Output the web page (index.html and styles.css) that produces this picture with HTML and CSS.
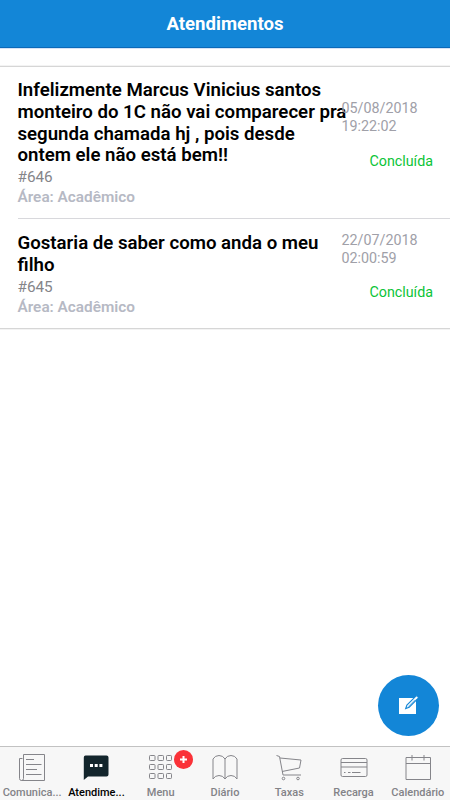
FILE: index.html
```html
<!DOCTYPE html>
<html lang="pt-BR">
<head>
<meta charset="utf-8">
<title>Atendimentos</title>
<link rel="stylesheet" href="styles.css">
</head>
<body>
<div class="app">
  <header class="header"><h1>Atendimentos</h1></header>
  <main class="content">
    <ul class="list">
      <li class="item">
        <div class="info">
          <h2>Infelizmente Marcus Vinicius santos<br>monteiro do 1C não vai comparecer pra<br>segunda chamada hj , pois desde<br>ontem ele não está bem!!</h2>
          <p class="number">#646</p>
          <p class="area">Área: Acadêmico</p>
        </div>
        <div class="meta">
          <p class="date">05/08/2018<br>19:22:02</p>
          <p class="status">Concluída</p>
        </div>
      </li>
      <li class="item">
        <div class="info">
          <h2>Gostaria de saber como anda o meu<br>filho</h2>
          <p class="number">#645</p>
          <p class="area">Área: Acadêmico</p>
        </div>
        <div class="meta">
          <p class="date">22/07/2018<br>02:00:59</p>
          <p class="status">Concluída</p>
        </div>
      </li>
    </ul>
  </main>
  <button class="fab" aria-label="Novo">
    <svg width="24" height="24" viewBox="0 0 24 24"><path d="M2 4h17v16H2z" fill="#fff"/><path d="M8.700 14.500l1.200-3.500 9-8.900q1-.6 1.900.3t.2 1.900l-8.800 8.900z" fill="#fff" stroke="#1386d7" stroke-width="1.100"/><path d="M11 12.800l7-7" stroke="#1386d7" stroke-width=".6"/></svg>
  </button>
  <nav class="tabs">
    <a class="tab">
      <svg width="28" height="30" viewBox="0 0 28 30"><path d="M5.500 1.500h21v26h-23q-2 0-2-2v-20h3M5.500 1.500v24q0 2-2 2M8 6.500h8M8 11.500h15.500M8 16.500h11M8 21.500h15.500"/></svg>
      <span>Comunica...</span>
    </a>
    <a class="tab active">
      <svg width="28" height="30" viewBox="0 0 28 30"><path class="bubble" d="M3.500 2.500h21q2 0 2 2v17q0 2-2 2H6l-4.200 3.500V4.500q0-2 1.700-2z"/><path class="dots" d="M8 11h3v3H8zM12.700 11h3v3h-3zM17.400 11h3v3h-3z"/></svg>
      <span>Atendime...</span>
    </a>
    <a class="tab">
      <svg width="28" height="30" viewBox="0 0 28 30"><g><rect x="2.500" y="2.500" width="5.500" height="5" rx=".8"/><rect x="11" y="2.500" width="5.500" height="5" rx=".8"/><rect x="19.500" y="2.500" width="5" height="5" rx=".8"/><rect x="2.500" y="11.500" width="5.500" height="5" rx=".8"/><rect x="11" y="11.500" width="5.500" height="5" rx=".8"/><rect x="19.500" y="11.500" width="5" height="5" rx=".8"/><rect x="2.500" y="20.500" width="5.500" height="5" rx=".8"/><rect x="11" y="20.500" width="5.500" height="5" rx=".8"/><rect x="19.500" y="20.500" width="5" height="5" rx=".8"/></g></svg>
      <b class="badge"><svg width="9" height="9" viewBox="0 0 9 9"><path d="M4.500 1v7M1 4.500h7"/></svg></b>
      <span>Menu</span>
    </a>
    <a class="tab">
      <svg width="28" height="30" viewBox="0 0 28 30"><path d="M14 6Q12 2.500 8 2.500T2 6v20q2-3.500 6-3.500t6 3.500q2-3.500 6-3.500t6 3.500V6q-2-3.500-6-3.500T14 6v20"/></svg>
      <span>Diário</span>
    </a>
    <a class="tab">
      <svg width="28" height="30" viewBox="0 0 28 30"><path d="M1.500 2.500l3 1 3.500 18.500h18M5 5l21 2-1.500 8L7 18.500"/><circle cx="8.500" cy="25.500" r="1.300"/><circle cx="23" cy="25.500" r="1.300"/></svg>
      <span>Taxas</span>
    </a>
    <a class="tab">
      <svg width="28" height="30" viewBox="0 0 28 30"><rect x="1" y="5.500" width="26" height="18" rx="1.500"/><path d="M1 9.500h26M1 14h26M4 19.500h1.500M8 19.500h2.500M12 19.500h8.500"/></svg>
      <span>Recarga</span>
    </a>
    <a class="tab">
      <svg width="28" height="30" viewBox="0 0 28 30"><path d="M2 4.500h24.500v22H2zM2 10.500h24.500M8 2v5.500M20 2v5.500"/></svg>
      <span>Calendário</span>
    </a>
  </nav>
</div>
</body>
</html>
```
FILE: styles.css
```css
* { box-sizing: border-box; margin: 0; padding: 0; }
body { font-family: Roboto, "Liberation Sans", sans-serif; background: #fff; }
.app { position: relative; height: 800px; display: flex; flex-direction: column; overflow: hidden; }
.header { height: 48px; display: flex; align-items: center; justify-content: center; background: #1386d7; border-bottom: 1px solid #0b69b8; box-shadow: 0 1px 0 #d5e3f5; }
.header h1 { font-size: 18.600px; line-height: 22px; font-weight: 700; color: #fff; }
.content { flex: 1; padding-top: 18px; }
.list { list-style: none; border-top: 1px solid #d6d6d6; border-bottom: 1px solid #d6d6d6; box-shadow: 0 -1px 0 #f3f3f3, 0 1px 0 #f3f3f3; }
.item { display: flex; justify-content: space-between; margin-left: 17.500px; height: 151px; padding-top: 13px; }
.item + .item { border-top: 1px solid #d8d8dc; height: 110px; padding-top: 14px; }
.info { width: 324px; white-space: nowrap; }
.info h2 { font-size: 18.650px; line-height: 21.800px; font-weight: 600; color: #000; }
.number { font-size: 15.300px; line-height: 21px; color: #858589; }
.area { font-size: 15.350px; line-height: 19px; font-weight: 600; color: #b6b9c4; }
.meta { width: 108.500px; padding-top: 20px; }
.item + .item .meta { padding-top: 0; margin-top: -1px; }
.date { font-size: 14.300px; line-height: 17.500px; font-weight: 400; color: #a0a0a8; }
.status { margin: 17px 17px 0 0; text-align: right; font-size: 14.300px; line-height: 18px; font-weight: 400; color: #0cc437; }
.item + .item .status { margin-top: 16px; }
.fab { position: absolute; left: 378px; top: 675px; width: 61px; height: 61px; border: 0; border-radius: 50%; background: #1386d7; display: flex; align-items: center; justify-content: center; }
.tabs { height: 54px; display: grid; grid-template-columns: repeat(7, 1fr); background: #f7f7f7; border-top: 1px solid #c2c2c2; }
.tab { position: relative; display: flex; flex-direction: column; align-items: center; padding-top: 6px; color: #838387; font-size: 11px; line-height: 14px; font-weight: 500; white-space: nowrap; }
.tab > svg { fill: none; stroke: #85858a; stroke-width: 1; }
.tab span { margin-top: 3px; }
.tab.active { color: #000; }
.tab .bubble { fill: #13252c; stroke: none; }
.tab .dots { fill: #fff; stroke: none; }
.badge { position: absolute; left: 45px; top: 3px; width: 19px; height: 19px; border-radius: 50%; background: #fa3238; display: flex; align-items: center; justify-content: center; }
.badge svg { stroke: #fff; stroke-width: 2; }
```
